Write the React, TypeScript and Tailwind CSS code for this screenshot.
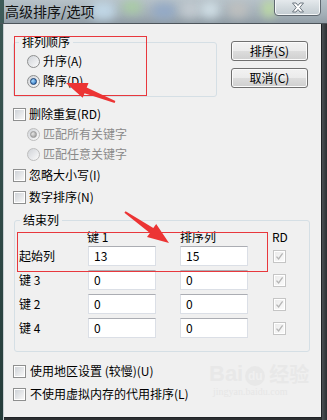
import React from "react";

function CheckBox({ disabled = false, checked = false }: { disabled?: boolean; checked?: boolean }) {
  return (
    <div
      className={`w-[13px] h-[13px] shrink-0 border ${
        disabled ? "border-[#c5c5c5]" : "border-[#8e8f8f]"
      } bg-white p-[1px]`}
    >
      <div
        className={`w-full h-full flex items-center justify-center ${
          disabled
            ? "bg-[linear-gradient(135deg,#ececec,#fafafa)]"
            : "bg-[linear-gradient(135deg,#cfd3d8,#f7f7f7)]"
        }`}
      >
        {checked && (
          <svg width="9" height="9" viewBox="0 0 9 9">
            <path d="M1.5 4.6 L3.6 7 L7.6 1.4" stroke="#b5b5b5" strokeWidth="1.3" fill="none" />
          </svg>
        )}
      </div>
    </div>
  );
}

function Radio({ checked = false, disabled = false }: { checked?: boolean; disabled?: boolean }) {
  return (
    <div
      className={`w-[13px] h-[13px] shrink-0 rounded-full border ${
        disabled ? "border-[#bdbdbd]" : "border-[#8e8f8f]"
      } bg-[linear-gradient(135deg,#d0d3d8,#fbfbfb)] flex items-center justify-center`}
    >
      {checked && (
        <div
          className={`w-[7px] h-[7px] rounded-full ${
            disabled
              ? "bg-[radial-gradient(circle_at_35%_35%,#e6e6e6,#8f8f8f)] border border-[#9a9a9a]"
              : "bg-[radial-gradient(circle_at_35%_35%,#a8dcff,#1d64b8)] border border-[#1b3f70]"
          }`}
        />
      )}
    </div>
  );
}

function Btn({ children }: { children: React.ReactNode }) {
  return (
    <div className="w-[77px] h-[20px] rounded-[3px] border border-[#707070] bg-[linear-gradient(#f2f2f2,#ebebeb_50%,#dddddd_50%,#cfcfcf)] shadow-[inset_0_0_0_1px_#fbfbfb] flex items-center justify-center text-[12px] leading-[16px] text-black">
      {children}
    </div>
  );
}

function Input({ value }: { value: string }) {
  return (
    <div className="w-[68px] h-[20px] shrink-0 bg-white border border-[#dbdfe6] border-t-[#abadb3] flex items-center pl-[5px] text-[12px] leading-[16px] text-black">
      {value}
    </div>
  );
}

function KeyRow({ label, a, b }: { label: string; a: string; b: string }) {
  return (
    <div className="flex items-center h-[20px]">
      <div className="w-[69px] text-[12px] leading-[16px]">{label}</div>
      <Input value={a} />
      <div className="w-[24px]" />
      <Input value={b} />
      <div className="w-[25px]" />
      <CheckBox disabled checked />
    </div>
  );
}

export default function App() {
  return (
    <div className="relative w-[327px] h-[420px] overflow-hidden flex flex-col bg-[#2c2f31] font-['Noto_Sans_CJK_SC','Microsoft_YaHei',sans-serif] text-black select-none">
      {/* title bar */}
      <div className="relative h-[24px] shrink-0 bg-[linear-gradient(#b6c1c8,#a3afb7_60%,#8f9ba4)] overflow-hidden">
        <div className="absolute left-[90px] top-[2px] w-[26px] h-[18px] rounded-full bg-[#c6dff0] blur-[5px] opacity-80" />
        <div className="absolute left-[122px] top-[0px] w-[20px] h-[14px] rounded-full bg-[#a8d49a] blur-[5px] opacity-70" />
        <div className="absolute left-[152px] top-[3px] w-[24px] h-[16px] rounded-full bg-[#8fa7c9] blur-[5px] opacity-80" />
        <div className="absolute left-[180px] top-[2px] w-[20px] h-[16px] rounded-full bg-[#c9d0d6] blur-[5px] opacity-80" />
        <div className="absolute left-[200px] top-[2px] w-[20px] h-[16px] rounded-full bg-[#d9e8ef] blur-[5px] opacity-80" />
        <div className="absolute left-[228px] top-[2px] w-[20px] h-[16px] rounded-full bg-[#c7c4c0] blur-[5px] opacity-70" />
        <div className="absolute left-[262px] top-[0px] w-[14px] h-[18px] rounded-full bg-[#bfe0a0] blur-[4px] opacity-80" />
        <div className="absolute left-0 top-0 w-[4px] h-full bg-[#3e5b58]" />
        <div className="relative pl-[5px] pt-[2px] text-[14px] leading-[18px] text-[#111]">高级排序/选项</div>
        <div className="absolute left-[274px] top-[-3px] w-[47px] h-[19px] rounded-b-[4px] border border-[#5f6870] bg-[linear-gradient(#e9edf0,#d3dade_55%,#c3ccd2)] shadow-[inset_0_0_0_1px_#f4f6f7] flex items-end justify-center pb-[2px]">
          <svg width="14" height="11" viewBox="0 0 14 11">
            <path
              d="M1.5 1 H5 L7 3.5 L9 1 H12.5 L8.8 5.5 L12.5 10 H9 L7 7.5 L5 10 H1.5 L5.2 5.5 Z"
              fill="#ffffff"
              stroke="#6d7780"
              strokeWidth="1"
              strokeLinejoin="round"
            />
          </svg>
        </div>
        <div className="absolute left-0 bottom-0 w-full h-[1px] bg-[#4d555b]" />
      </div>

      {/* body row */}
      <div className="flex flex-1 min-h-0">
        <div className="w-[4px] shrink-0 bg-[linear-gradient(#3b5753,#253c3a)] border-r border-[#c8cfd2]" />
        <div className="flex-1 flex flex-col bg-[#f0f0f0] border-r border-b border-[#1f2326] mb-[2px] relative">
          <div className="pl-[9px] pt-[10px]">
            {/* top section */}
            <div className="flex">
              <fieldset className="w-[204px] h-[63px] border border-[#d5dfe5] rounded-[3px]">
                <legend className="ml-[5px] px-[3px] text-[12px] leading-[16px]">排列顺序</legend>
                <div className="pl-[13px]">
                  <div className="flex items-center gap-[3px] h-[20px] mt-[1px]">
                    <Radio />
                    <span className="text-[12px] leading-[16px]">升序(A)</span>
                  </div>
                  <div className="flex items-center gap-[3px] h-[20px]">
                    <Radio checked />
                    <span className="text-[12px] leading-[16px]">降序(D)</span>
                  </div>
                </div>
              </fieldset>
              <div className="ml-[14px] mt-[7px] flex flex-col gap-[7px]">
                <Btn>排序(S)</Btn>
                <Btn>取消(C)</Btn>
              </div>
            </div>

            {/* options */}
            <div className="mt-[7px] flex items-center gap-[3px] h-[20px]">
              <CheckBox />
              <span className="text-[12px] leading-[16px]">删除重复(RD)</span>
            </div>
            <div className="pl-[14px] flex items-center gap-[3px] h-[20px]">
              <Radio checked disabled />
              <span className="text-[12px] leading-[16px] text-[#8a8a8a]">匹配所有关键字</span>
            </div>
            <div className="pl-[14px] flex items-center gap-[3px] h-[20px]">
              <Radio disabled />
              <span className="text-[12px] leading-[16px] text-[#8a8a8a]">匹配任意关键字</span>
            </div>
            <div className="mt-[1px] flex items-center gap-[3px] h-[20px]">
              <CheckBox />
              <span className="text-[12px] leading-[16px]">忽略大小写(I)</span>
            </div>
            <div className="mt-[2px] flex items-center gap-[3px] h-[20px]">
              <CheckBox />
              <span className="text-[12px] leading-[16px]">数字排序(N)</span>
            </div>

            {/* key columns */}
            <fieldset className="mt-[5px] ml-[1px] w-[296px] border border-[#d5dfe5] rounded-[3px] pb-[13px]">
              <legend className="ml-[5px] px-[3px] text-[12px] leading-[16px]">结束列</legend>
              <div className="pl-[4px]">
                <div className="flex items-center h-[16px] mt-[1px] text-[12px] leading-[16px]">
                  <div className="w-[68px]" />
                  <div className="w-[93px]">键 1</div>
                  <div className="w-[92px]">排序列</div>
                  <div>RD</div>
                </div>
                <div className="mt-[1px] flex flex-col gap-[4px]">
                  <KeyRow label="起始列" a="13" b="15" />
                  <KeyRow label="键 3" a="0" b="0" />
                  <KeyRow label="键 2" a="0" b="0" />
                  <KeyRow label="键 4" a="0" b="0" />
                </div>
              </div>
            </fieldset>

            <div className="mt-[9px] flex items-center gap-[4px] h-[20px]">
              <CheckBox />
              <span className="text-[12px] leading-[16px]">使用地区设置 (较慢)(U)</span>
            </div>
            <div className="mt-[3px] flex items-center gap-[4px] h-[20px]">
              <CheckBox />
              <span className="text-[12px] leading-[16px]">不使用虚拟内存的代用排序(L)</span>
            </div>
          </div>

          {/* watermark */}
          <div className="absolute left-[205px] top-[338px] flex flex-col items-start pointer-events-none">
            <div className="flex items-end text-[#e8e8e8] font-['Liberation_Sans',sans-serif] font-bold text-[22px] leading-[24px]">
              <span>Bai</span>
              <span className="ml-[2px] w-[20px] h-[20px] rounded-full bg-[#e8e8e8] text-[#f0f0f0] text-[12px] leading-[20px] text-center">du</span>
              <span className="ml-[4px] text-[20px] font-['Noto_Sans_CJK_SC',sans-serif]">经验</span>
            </div>
            <div className="text-[#e6e6e6] text-[10px] leading-[12px] font-['Liberation_Serif',serif] ml-[4px]">jingyan.baidu.com</div>
          </div>
        </div>
        <div className="w-[5px] shrink-0 bg-[linear-gradient(90deg,#4b5054,#2b2f32)]" />
      </div>

      {/* annotations */}
      <div className="absolute left-[14px] top-[36px] w-[133px] h-[60px] border-[1.5px] border-[#e8383d] pointer-events-none" />
      <div className="absolute left-[17px] top-[232px] w-[251px] h-[40px] border-[1.5px] border-[#e8383d] pointer-events-none" />
      <svg className="absolute left-0 top-0 pointer-events-none" width="327" height="420" viewBox="0 0 327 420">
        <polygon
          points="66,83 88.5,83 86.7,87.6 115.4,101.1 114.6,102.9 84.5,93.2 82.7,97.8"
          fill="#ec3434"
        />
        <polygon
          points="169,243 147,237.1 149.9,233 124.4,212.8 125.6,211.2 153.3,228.1 156.2,223.9"
          fill="#ec3434"
        />
      </svg>
    </div>
  );
}
